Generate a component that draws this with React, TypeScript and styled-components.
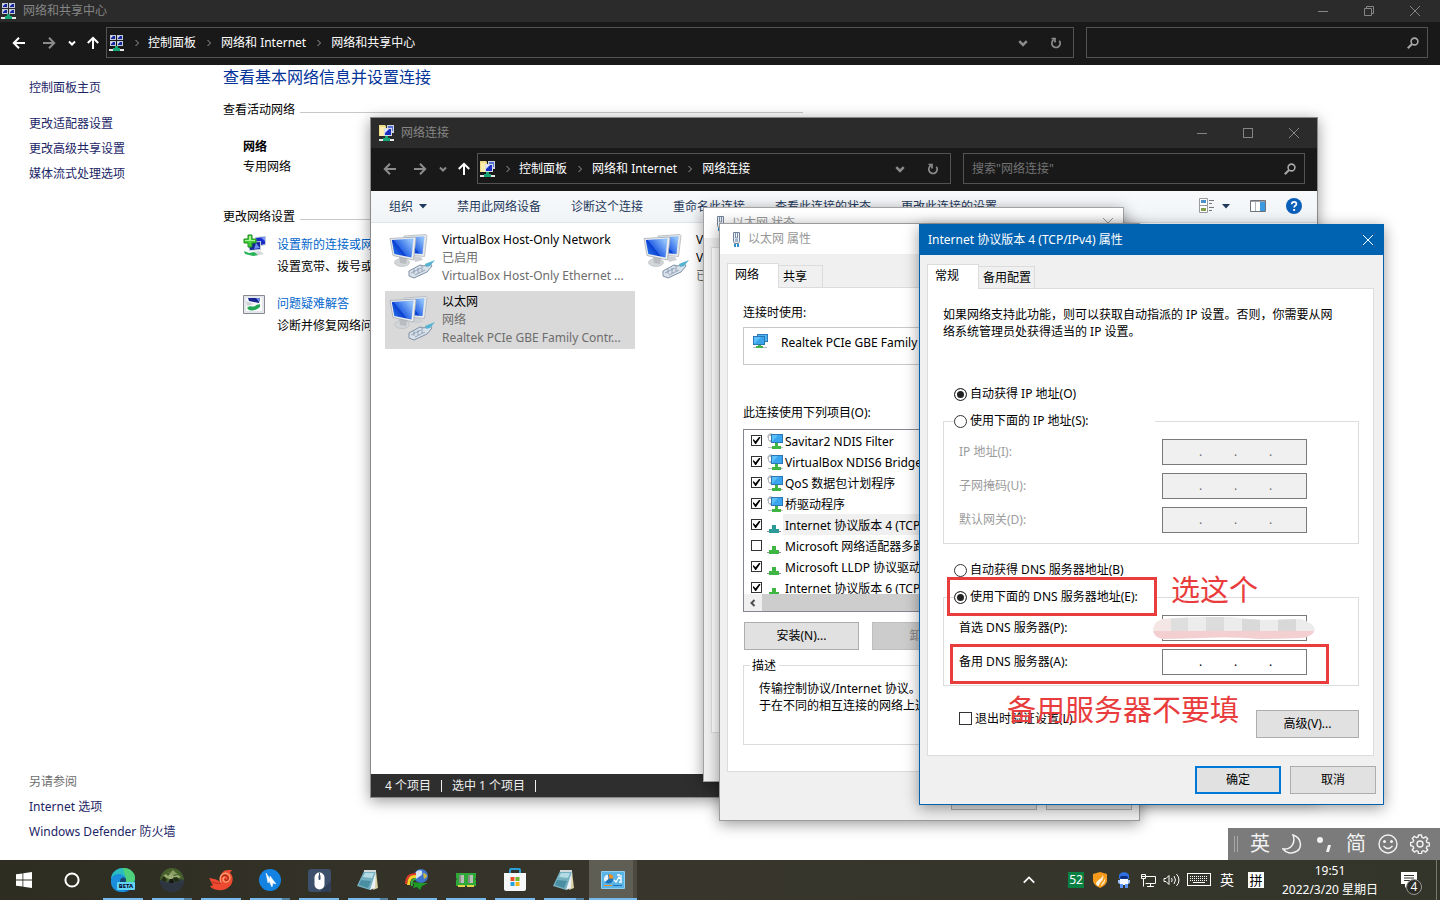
import React from "react";
import styled, { createGlobalStyle, css } from "styled-components";

const GlobalStyle = createGlobalStyle`
  *, *::before, *::after { box-sizing: border-box; }
  body {
    margin: 0;
    font: 12px/16px "Noto Sans", "Noto Sans CJK SC", sans-serif;
    color: #000;
    background: #fff;
  }
  button, input { font: inherit; color: inherit; margin: 0; padding: 0; border-radius: 0; }
  button { background: none; border: 0; }
  p, h1, h2, ul, dl, dd, dt { margin: 0; padding: 0; font: inherit; list-style: none; }
  a { text-decoration: none; color: inherit; }
  svg { display: block; flex: none; }
`;

/* ---------- desktop and windows ---------- */

const Desktop = styled.div`
  position: relative;
  display: flex;
  flex-direction: column;
  min-height: 100vh;
  overflow: hidden;
`;

const MainWindow = styled.section`
  flex: 1;
  display: flex;
  flex-direction: column;
  background: #fff;
`;

const FloatingWindow = styled.section<{ $x: number; $y: number; $w: number; $h: number; $edge: string; $bg: string }>`
  position: absolute;
  left: ${(p) => p.$x}px;
  top: ${(p) => p.$y}px;
  width: ${(p) => p.$w}px;
  min-height: ${(p) => p.$h}px;
  display: flex;
  flex-direction: column;
  border: 1px solid ${(p) => p.$edge};
  background: ${(p) => p.$bg};
  box-shadow: 0 3px 14px rgba(0, 0, 0, 0.4);
`;

const TitleBar = styled.header<{ $height: number; $tone: "dark" | "light" | "blue" }>`
  display: flex;
  align-items: center;
  height: ${(p) => p.$height}px;
  ${(p) =>
    p.$tone === "dark"
      ? css`background: #2b2b2b; color: #858585;`
      : p.$tone === "blue"
      ? css`background: #0063b1; color: #fff;`
      : css`background: #fff; color: #999;`}
`;

const TitleIcon = styled.span<{ $left: number }>`
  padding-left: ${(p) => p.$left}px;
`;

const TitleText = styled.h1`
  flex: 1;
  padding-left: 6px;
`;

const CaptionButton = styled.button`
  width: 46px;
  height: 100%;
  display: grid;
  place-items: center;
`;

const CloseButton = styled(CaptionButton)`
  width: 30px;
`;

const CaptionEnd = styled.span`
  width: 2px;
`;

/* ---------- explorer navigation ---------- */

const NavBar = styled.nav`
  display: flex;
  align-items: center;
  height: 43px;
  padding: 0 12px 2px 4px;
  background: #191919;
  color: #fff;
`;

const NavButton = styled.button<{ $w: number; $dim?: boolean }>`
  width: ${(p) => p.$w}px;
  height: 30px;
  display: grid;
  place-items: center;
  color: ${(p) => (p.$dim ? "#8c8c8c" : "#fff")};
`;

const AddressBar = styled.div`
  flex: 1;
  display: flex;
  align-items: center;
  height: 31px;
  padding-left: 2px;
  border: 1px solid #535353;
  color: #9a9a9a;
`;

const Crumb = styled.a`
  color: #fff;
`;

const CrumbMark = styled.span`
  width: 25px;
  display: grid;
  place-items: center;
  &:first-of-type { width: 23px; }
`;

const Spacer = styled.span`
  flex: 1;
`;

const SearchBox = styled.label`
  display: flex;
  align-items: center;
  width: 342px;
  height: 31px;
  margin-left: 12px;
  padding: 0 8px;
  border: 1px solid #535353;
  color: #a8a8a8;
`;

const SearchInput = styled.input`
  flex: 1;
  min-width: 0;
  border: 0;
  outline: 0;
  background: none;
  &::placeholder { color: #727272; opacity: 1; }
`;

/* ---------- network and sharing centre ---------- */

const MainBody = styled.div`
  flex: 1;
  display: flex;
`;

const Sidebar = styled.aside`
  display: flex;
  flex-direction: column;
  width: 194px;
  padding: 10px 0 16px 29px;
  color: #1b2566;
  line-height: 25px;
`;

const SideHome = styled.a`
  margin-bottom: 11px;
`;

const SideCaption = styled.p`
  color: #6d6d6d;
`;

const Content = styled.main`
  flex: 1;
  padding: 1px 0 0 29px;
`;

const PageTitle = styled.h1`
  font-size: 16px;
  line-height: 22px;
  color: #003399;
`;

const SectionHead = styled.h2<{ $top: number }>`
  display: flex;
  align-items: center;
  gap: 5px;
  width: 580px;
  margin-top: ${(p) => p.$top}px;
  &::after {
    content: "";
    flex: 1;
    height: 1px;
    margin-top: 4px;
    background: #c8c8c8;
  }
`;

const ActiveNetwork = styled.div`
  padding: 19px 0 0 20px;
  line-height: 20px;
`;

const Strong = styled.strong`
  font-weight: 700;
`;

const Task = styled.div<{ $top: number }>`
  display: flex;
  gap: 10px;
  margin-top: ${(p) => p.$top}px;
  padding-left: 20px;
  line-height: 22px;
`;

const TaskLink = styled.a`
  color: #0066cc;
`;

/* ---------- network connections window ---------- */

const CommandBar = styled.div`
  display: flex;
  align-items: center;
  gap: 30px;
  height: 32px;
  padding: 0 15px 0 18px;
  background: linear-gradient(#f7f9fb, #f1f4f7);
  border-bottom: 1px solid #dfe2e6;
  color: #1e395b;
`;

const Command = styled.button`
  display: flex;
  align-items: center;
  gap: 6px;
  white-space: nowrap;
`;

const ViewTools = styled.div`
  display: flex;
  align-items: center;
  gap: 20px;
  margin-left: auto;
  padding-bottom: 1px;
`;

const ConnectionGrid = styled.ul`
  flex: 1;
  display: grid;
  grid-template-columns: 250px 250px;
  grid-auto-rows: 58px;
  gap: 4px;
  padding: 6px 14px;
  background: #fff;
`;

const Connection = styled.li<{ $selected?: boolean }>`
  display: flex;
  gap: 7px;
  padding: 2px 4px;
  line-height: 18px;
  color: #6d6d6d;
  background: ${(p) => (p.$selected ? "#d9d9d9" : "transparent")};
`;

const ConnectionText = styled.div`
  min-width: 0;
  white-space: nowrap;
`;

const ConnectionName = styled.p`
  color: #000;
`;

const StatusBar = styled.footer`
  display: flex;
  align-items: center;
  gap: 10px;
  height: 23px;
  padding-left: 14px;
  background: #2e2e2e;
  color: #f0f0f0;
`;

const StatusMark = styled.span`
  width: 1px;
  height: 12px;
  background: #f0f0f0;
`;

/* ---------- property dialogs ---------- */

const DialogBody = styled.div`
  flex: 1;
  display: flex;
  flex-direction: column;
  padding: 9px 9px 10px 7px;
  background: #f0f0f0;
`;

const TabList = styled.div`
  display: flex;
  align-items: flex-end;
`;

const Tab = styled.button<{ $w: number; $active?: boolean }>`
  width: ${(p) => p.$w}px;
  height: ${(p) => (p.$active ? 25 : 22)}px;
  padding: ${(p) => (p.$active ? "0 0 3px 7px" : "0 0 0 4px")};
  border: 1px solid #dcdcdc;
  border-left-width: ${(p) => (p.$active ? 1 : 0)}px;
  border-bottom: 0;
  margin-bottom: ${(p) => (p.$active ? -1 : 0)}px;
  background: ${(p) => (p.$active ? "#fff" : "#f0f0f0")};
  position: relative;
  text-align: left;
  white-space: nowrap;
`;

const TabPanel = styled.div`
  display: flex;
  flex-direction: column;
  padding: 17px 14px 17px 15px;
  border: 1px solid #dcdcdc;
  background: #fff;
`;

const StatusPanel = styled(TabPanel)`
  flex: 1;
  margin-bottom: 38px;
`;

const AdapterBox = styled.div`
  display: flex;
  gap: 13px;
  height: 38px;
  margin: 6px 0 40px;
  padding: 5px 8px;
  border: 1px solid #c9c9c9;
  line-height: 20px;
`;

const ItemBox = styled.div`
  margin-top: 8px;
  border: 1px solid #828790;
`;

const ItemList = styled.ul`
  height: 164px;
  overflow: hidden;
`;

const Item = styled.li`
  height: 21px;
`;

const ItemLabel = styled.label`
  display: flex;
  align-items: center;
  height: 21px;
  padding-left: 7px;
  white-space: nowrap;
`;

const ItemText = styled.span<{ $selected?: boolean }>`
  flex: 1;
  padding: 4px 0 1px 2px;
  background: ${(p) => (p.$selected ? "#f0f0f0" : "transparent")};
`;

const ItemIcon = styled.span`
  margin-left: 5px;
`;

const CheckBox = styled.input.attrs({ type: "checkbox" })<{ $size: number }>`
  appearance: none;
  flex: none;
  display: grid;
  place-items: center;
  width: ${(p) => p.$size}px;
  height: ${(p) => p.$size}px;
  border: 1px solid #333;
  background: #fff;
  &:checked::before {
    content: "";
    width: 8px;
    height: 8px;
    background: #000;
    clip-path: polygon(0 42%, 14% 34%, 38% 58%, 86% 0, 100% 12%, 44% 94%, 34% 94%);
  }
`;

const ScrollRow = styled.div`
  display: flex;
  height: 17px;
  background: #f0f0f0;
  color: #505050;
`;

const ScrollArrow = styled.button`
  width: 18px;
  display: grid;
  place-items: center;
`;

const ScrollThumb = styled.div`
  width: 260px;
  background: #cdcdcd;
`;

const ButtonRow = styled.div`
  display: flex;
  gap: 13px;
  margin: 10px 0 0 1px;
`;

const ActionRow = styled.div`
  display: flex;
  justify-content: flex-end;
  gap: 9px;
  margin: 10px -2px 0 0;
`;

const PushButton = styled.button<{ $w: number; $primary?: boolean }>`
  width: ${(p) => p.$w}px;
  height: 28px;
  background: #e1e1e1;
  border: ${(p) => (p.$primary ? "2px solid #0078d7" : "1px solid #adadad")};
  &:disabled { background: #ccc; border-color: #bfbfbf; color: #838383; }
`;

const Description = styled.fieldset`
  min-width: 0;
  height: 88px;
  margin: 7px 0 9px;
  padding: 6px 15px 0;
  border: 1px solid #dcdcdc;
  line-height: 17px;
  white-space: nowrap;
`;

const DescriptionLegend = styled.legend`
  margin-left: -9px;
  padding: 0 3px 0 2px;
  line-height: 17px;
`;

const Intro = styled.p`
  line-height: 17px;
  margin-bottom: 46px;
`;

const RadioLabel = styled.label`
  display: flex;
  align-items: center;
  gap: 3px;
  height: 16px;
  padding-left: 11px;
`;

const RadioText = styled.span`
  line-height: 16px;
`;

const Radio = styled.input.attrs({ type: "radio" })`
  appearance: none;
  flex: none;
  width: 13px;
  height: 13px;
  border: 1px solid #333;
  border-radius: 50%;
  background: #fff;
  &:checked { background: #222; box-shadow: inset 0 0 0 2px #fff; }
`;

const AddressGroup = styled.fieldset`
  display: flex;
  flex-direction: column;
  gap: 8px;
  min-width: 0;
  margin: 11px 0 0;
  padding: 10px 51px 10px 15px;
  border: 1px solid #dcdcdc;
`;

const GroupLegend = styled.legend`
  width: 201px;
  margin-left: -5px;
  padding: 0;
  ${RadioLabel} { padding-left: 0; }
`;

const DnsBlock = styled.div`
  margin-top: 18px;
`;

const AddressRow = styled.div<{ $disabled?: boolean }>`
  display: flex;
  align-items: center;
  justify-content: space-between;
  color: ${(p) => (p.$disabled ? "#9c9c9c" : "#000")};
`;

const OctetBox = styled.div<{ $disabled?: boolean }>`
  position: relative;
  display: flex;
  align-items: center;
  width: 145px;
  height: 26px;
  padding-left: 4px;
  border: 1px solid #7a7a7a;
  background: ${(p) => (p.$disabled ? "#f0f0f0" : "#fff")};
  color: ${(p) => (p.$disabled ? "#6d6d6d" : "#000")};
`;

const Octet = styled.input`
  width: 32px;
  border: 0;
  outline: 0;
  background: none;
  text-align: center;
`;

const Dot = styled.span`
  width: 3px;
`;

const Mosaic = styled.svg`
  position: absolute;
  left: -10px;
  top: 1px;
`;

const FooterRow = styled.div`
  display: flex;
  justify-content: space-between;
  align-items: flex-start;
  margin: 24px 0 0 16px;
`;

const CheckLabel = styled.label`
  display: flex;
  align-items: center;
  gap: 3px;
  height: 17px;
`;

/* ---------- red tutorial marks over the dialog ---------- */

const MarkBox = styled.div<{ $x: number; $y: number; $w: number; $h: number }>`
  position: absolute;
  left: ${(p) => p.$x}px;
  top: ${(p) => p.$y}px;
  width: ${(p) => p.$w}px;
  height: ${(p) => p.$h}px;
  border: 3px solid #e93c3c;
  pointer-events: none;
`;

const MarkText = styled.p<{ $x: number; $y: number }>`
  position: absolute;
  left: ${(p) => p.$x}px;
  top: ${(p) => p.$y}px;
  font-size: 29px;
  line-height: 36px;
  color: #e93c3c;
  white-space: nowrap;
  pointer-events: none;
`;

/* ---------- taskbar ---------- */

const Taskbar = styled.footer`
  display: flex;
  height: 40px;
  background: linear-gradient(90deg, #2e2d22, #38362c 45%, #33352a);
  color: #fff;
`;

const SystemButton = styled.button`
  width: 48px;
  display: grid;
  place-items: center;
`;

const AppList = styled.div`
  display: flex;
  gap: 1px;
  padding-left: 3px;
`;

const AppButton = styled.button<{ $active?: boolean; $stacked?: boolean }>`
  display: grid;
  place-items: center;
  position: relative;
  width: 48px;
  background: ${(p) =>
    p.$active ? "linear-gradient(90deg, #5f5e54 44px, #4b4a41 44px)" : "none"};
  &::after {
    content: "";
    position: absolute;
    left: ${(p) => (p.$active ? 0 : 4)}px;
    right: ${(p) => (p.$active ? 0 : 4)}px;
    bottom: 0;
    height: 2px;
    background: ${(p) =>
      p.$stacked ? "linear-gradient(90deg, #76b9ed 32px, #54819f 32px)" : "#76b9ed"};
  }
`;

const Tray = styled.div`
  display: flex;
  align-items: center;
  margin-left: auto;
`;

const TrayButton = styled.button<{ $w: number }>`
  width: ${(p) => p.$w}px;
  height: 40px;
  display: grid;
  place-items: center;
  position: relative;
`;

const NoticeButton = styled(TrayButton)`
  padding-right: 7px;
`;

const GreenBadge = styled.span`
  width: 16px;
  background: #0b8043;
  line-height: 16px;
  text-align: center;
`;

const ImeBadge = styled.span`
  width: 16px;
  background: #fff;
  color: #000;
  font-size: 13px;
  line-height: 16px;
  text-align: center;
`;

const LangText = styled.span`
  font-size: 14px;
`;

const Clock = styled.time`
  width: 116px;
  line-height: 19px;
  text-align: center;
`;

const CountBadge = styled.span`
  position: absolute;
  left: 18px;
  top: 19px;
  width: 16px;
  height: 16px;
  border: 1px solid #999;
  border-radius: 50%;
  background: #2b2c26;
  line-height: 14px;
  text-align: center;
`;

const DesktopEdge = styled.button`
  width: 4px;
  height: 40px;
  border-left: 1px solid #77776f;
`;

const ImeBar = styled.div`
  position: absolute;
  right: 0;
  bottom: 40px;
  display: flex;
  height: 32px;
  padding-right: 4px;
  background: #7b7b7b;
  color: #f2f2f2;
`;

const ImeHandle = styled.span`
  align-self: center;
  width: 4px;
  height: 16px;
  margin: 0 6px;
  border: solid #a8a8a8;
  border-width: 0 1px;
`;

const ImeButton = styled.button`
  width: 32px;
  display: grid;
  place-items: center;
  font-size: 20px;
  line-height: 28px;
`;

/* ---------- icons ---------- */

const MiniPc = ({ x, y }: { x: number; y: number }) => (
  <g>
    <rect x={x} y={y} width="6" height="5" fill="#c4c9d6" />
    <rect x={x + 1} y={y + 1} width="4" height="3" fill="#1626a0" />
    <path d={`M${x + 1} ${y + 1}h2l-2 2z`} fill="#dfe4ff" />
  </g>
);

const HubIcon = () => (
  <svg width="16" height="16" viewBox="0 0 16 16">
    <MiniPc x={1} y={0} />
    <MiniPc x={8} y={0} />
    <MiniPc x={1} y={6} />
    <MiniPc x={8} y={6} />
    <path d="M6 11h3v2h2v3H4v-3h2z" fill="#17a673" />
    <path d="M0 14h4v2H0zM11 14h4v2h-4z" fill="#e4e8e8" />
  </svg>
);

const FolderNetIcon = () => (
  <svg width="16" height="16" viewBox="0 0 16 16">
    <path d="M0 0h6l1 1v10H0z" fill="#f0dc86" />
    <path d="M1 2h5v9H1z" fill="#f9edb0" />
    <rect x="8" y="0" width="7" height="8" fill="#cfd3dc" />
    <rect x="9" y="1" width="5" height="5" fill="#5570d8" />
    <rect x="5" y="3" width="8" height="8" fill="#d6dae4" />
    <rect x="6" y="4" width="6" height="6" fill="#1a2ec0" />
    <path d="M6 4h4l-4 4z" fill="#dfe6ff" />
    <path d="M6 11h3v2h2v3H4v-3h2z" fill="#17a673" />
    <path d="M0 14h4v2H0zM11 14h4v2h-4z" fill="#e4e8e8" />
  </svg>
);

const Arrow = ({ turn = 0 }: { turn?: number }) => (
  <svg width="14" height="14" viewBox="0 0 14 14" fill="none" stroke="currentColor" strokeWidth="2">
    <g transform={`rotate(${turn} 7 7)`}>
      <path d="M13 7H2M7 1.800L1.800 7L7 12.200" />
    </g>
  </svg>
);

const Chevron = ({ size = 8, turn = 0, weight = 2 }: { size?: number; turn?: number; weight?: number }) => (
  <svg width={size} height={size} viewBox="0 0 8 8" fill="none" stroke="currentColor" strokeWidth={weight}>
    <path transform={`rotate(${turn} 4 4)`} d="M1 2.500l3 3l3-3" />
  </svg>
);

const RefreshIcon = () => (
  <svg width="12" height="12" viewBox="0 0 12 12" fill="none" stroke="currentColor" strokeWidth="1.700">
    <path d="M4 2.600A4.200 4.200 0 1 0 9.300 3.700" />
    <path d="M1.500 1.500H5v4" />
  </svg>
);

const MagnifierIcon = () => (
  <svg width="12" height="12" viewBox="0 0 12 12" fill="none" stroke="currentColor" strokeWidth="1.600">
    <circle cx="7.500" cy="4.500" r="3.400" />
    <path d="M5 7L.8 11.200" strokeWidth="2" />
  </svg>
);

const CloseIcon = () => (
  <svg width="12" height="12" viewBox="0 0 12 12" fill="none" stroke="currentColor">
    <path d="M1 1l10 10M11 1L1 11" />
  </svg>
);

const MinimizeIcon = () => (
  <svg width="10" height="10" viewBox="0 0 10 10" fill="none" stroke="currentColor">
    <path d="M0 5.500h10" />
  </svg>
);

const MaximizeIcon = () => (
  <svg width="10" height="10" viewBox="0 0 10 10" fill="none" stroke="currentColor">
    <rect x=".5" y=".5" width="9" height="9" />
  </svg>
);

const RestoreIcon = () => (
  <svg width="10" height="10" viewBox="0 0 10 10" fill="none" stroke="currentColor">
    <path d="M.5 2.500h7v7h-7zM2.500 2.500v-2h7v7h-2" />
  </svg>
);

const CaretIcon = () => (
  <svg width="8" height="5" viewBox="0 0 8 5">
    <path d="M0 0h8L4 4.500z" fill="currentColor" />
  </svg>
);

const NewConnectionIcon = () => (
  <svg width="24" height="24" viewBox="0 0 24 24">
    <path d="M12 3l11-1v9l-10 2z" fill="#c3cbd6" />
    <path d="M13 4l9-1v7l-8 2z" fill="#1930c8" />
    <path d="M18 3.500l4-.5v4z" fill="#7f9bff" />
    <path d="M5 8l13-1v9L6 17z" fill="#c9d0da" />
    <path d="M6 9l11-1v7L7 16z" fill="#14249a" />
    <path d="M11 15l6-1-4-5z" fill="#6f8df0" />
    <path d="M9 18l8-1 4 3-9 2z" fill="#d5d9de" />
    <path d="M1 17l5 2 5-1 4 3-5 1-8-2z" fill="#29b35a" />
    <path d="M5 1h4v4h4v4H9v4H5V9H1V5h4z" fill="#43cf3a" stroke="#1c8c1c" />
    <path d="M6 2h2v4h4v1H2V6h4z" fill="#a6f598" />
  </svg>
);

const TroubleshootIcon = () => (
  <svg width="24" height="22" viewBox="0 0 24 22">
    <path d="M.5 2.500h21v18h-21z" fill="#e3e6ea" stroke="#86898f" />
    <path d="M3 5h16v13H3z" fill="#fafafa" />
    <path d="M5 5h12l-1 5-10-2z" fill="#16258f" />
    <path d="M13 5h4l-1 4z" fill="#6f8be8" />
    <path d="M4 15c3-4 6 0 8-2s4-1 5-2v3c-3 3-8 4-11 3z" fill="#22a852" />
    <path d="M3 8l8 3-7 2z" fill="#cdd2d8" />
  </svg>
);

const ConnectionIcon = () => (
  <svg width="46" height="50" viewBox="0 0 46 50">
    <defs>
      <linearGradient id="screenGlow" x1="0" y1="1" x2="1" y2="0.300">
        <stop offset="0" stopColor="#2f86f5" />
        <stop offset=".48" stopColor="#0b3fd0" />
        <stop offset=".5" stopColor="#2a66e6" />
        <stop offset="1" stopColor="#8fc0fb" />
      </linearGradient>
    </defs>
    <path d="M24 25l8 1 2 3-8 2z" fill="#cdd0d4" />
    <path d="M15 5l22-1.500 1 1-2.500 21L20 24z" fill="#e6e9ec" stroke="#b0b5bb" strokeWidth=".8" />
    <path d="M17 6.500l18.500-1.300L33.500 23 20 22z" fill="url(#screenGlow)" />
    <ellipse cx="13" cy="31.500" rx="7.500" ry="4" fill="#d3d6d9" stroke="#b4b8bc" strokeWidth=".6" />
    <path d="M10 25l8 2-1 6-6-1z" fill="#b9bdc2" />
    <path d="M1 7.500L26 6l1 1-2.500 22L4 24.500z" fill="#eceef0" stroke="#a5abb2" strokeWidth=".8" />
    <path d="M2.800 9L24.500 7.600 22.500 26.500 5.300 23z" fill="url(#screenGlow)" />
    <path d="M20 40l11-6 4 1 6-3 2 3-5 6-13 6-5-2z" fill="#d9e2ea" stroke="#7e90a5" />
    <path d="M22 42l10-5M26 44l10-5M25 38v5M29 37v5M33 35v5" stroke="#8193a8" strokeWidth=".8" fill="none" />
    <path d="M36 33l10-4-5 6-4 1z" fill="#55b2d0" />
  </svg>
);

const PlugIcon = () => (
  <svg width="11" height="17" viewBox="0 0 11 17">
    <path d="M2.500 1.500h6v9l-1 2h-4l-1-2z" fill="#eef2f6" stroke="#6f8299" />
    <path d="M4.500 2v5h2V2" fill="none" stroke="#7c8ea3" />
    <path d="M4 8h3v3H4z" fill="#9db4ca" />
    <path d="M3 13h2v3H3zM6 13h2v3H6z" fill="#2a8fd0" />
  </svg>
);

const AdapterIcon = () => (
  <svg width="16" height="16" viewBox="0 0 16 16">
    <path d="M5 1h11v8H5z" fill="#2f7ab5" />
    <path d="M6 2h9v6H6z" fill="#4fb4f4" />
    <path d="M1 3h12v9H1z" fill="#2b77b3" />
    <path d="M2 4h10v7H2z" fill="#5cc0fa" />
    <path d="M2 11l7-7h3v7z" fill="#3ba5ec" />
    <path d="M6 12h3v1h2v2H4v-2h2z" fill="#46b04a" />
    <path d="M1 14h3v1H1zM11 14h4v1h-4z" fill="#b9bdc0" />
  </svg>
);

const ServiceIcon = () => (
  <svg width="16" height="16" viewBox="0 0 16 16">
    <path d="M3 0l3 1v9l-3-1-2-2V5L0 4l1-2z" fill="#b4bac1" />
    <path d="M2 3h2v4H2z" fill="#fff" />
    <path d="M4 1h12v9H4z" fill="#2d78b4" />
    <path d="M5 2h10v7H5z" fill="#5cc0fa" />
    <path d="M5 9l6-7h4v7z" fill="#38a5ee" />
    <path d="M8 10h3v3h3v3H5v-3h3z" fill="#3fb543" />
    <path d="M1 14h4v1H1zM14 14h2v1h-2z" fill="#b9bdc0" />
  </svg>
);

const ProtocolIcon = ({ tint = "#3fb543" }: { tint?: string }) => (
  <svg width="16" height="16" viewBox="0 0 16 16">
    <path d="M5 8h4v4h3v4H2v-4h3z" fill={tint} />
    <path d="M0 14h2v1H0zM12 14h2v1h-2z" fill="#8a9096" />
  </svg>
);

const DetailViewIcon = () => (
  <svg width="17" height="16" viewBox="0 0 17 16" fill="none">
    <path d="M.5.500h8v7h-8zM.5 7.500h8v7h-8z" fill="#fff" stroke="#9a9a9a" />
    <path d="M2 2h5v3H2z" fill="#4b8fc9" />
    <path d="M2 10h5v3H2z" fill="#83a04f" />
    <path d="M10 2.500h5M10 5.500h3M10 9.500h5M10 12.500h3" stroke="#777" />
  </svg>
);

const PreviewPaneIcon = () => (
  <svg width="16" height="12" viewBox="0 0 16 12">
    <path d="M.5.500h15v11H.5z" fill="#fff" stroke="#6f7378" />
    <path d="M1 1h14v1H1z" fill="#a0a4a8" />
    <path d="M10 2h5v9h-5z" fill="#3c9be0" />
    <path d="M5 2h1v9H5z" fill="#b0b4b8" />
  </svg>
);

const HelpIcon = () => (
  <svg width="16" height="16" viewBox="0 0 16 16">
    <circle cx="8" cy="8" r="8" fill="#0a5fb8" />
    <path d="M5.700 6.200C5.700 3 10.400 3.200 10.400 6C10.400 7.800 8.100 7.700 8.100 9.600" fill="none" stroke="#fff" strokeWidth="1.700" />
    <rect x="7.200" y="11" width="1.900" height="1.900" fill="#fff" />
  </svg>
);

const WindowsLogo = () => (
  <svg width="16" height="16" viewBox="0 0 16 16" fill="#fff">
    <path d="M0 2.300l6.500-.9v6.100H0zM7.300 1.300L16 0v7.500H7.300zM0 8.400h6.500v6.200L0 13.700zM7.300 8.400H16V16l-8.700-1.200z" />
  </svg>
);

const CortanaIcon = () => (
  <svg width="16" height="16" viewBox="0 0 16 16">
    <circle cx="8" cy="8" r="6.600" fill="none" stroke="#fff" strokeWidth="2" />
  </svg>
);

const BetaTag = styled.span`
  position: absolute;
  left: 18px;
  top: 22px;
  width: 18px;
  height: 8px;
  border-radius: 1px;
  background: #62d5f7;
  color: #002;
  font-size: 6px;
  font-weight: 700;
  line-height: 8px;
  text-align: center;
`;

const EdgeIcon = () => (
  <>
    <svg width="24" height="24" viewBox="0 0 24 24">
      <circle cx="12" cy="12" r="12" fill="#1374c8" />
      <path d="M0 11C1-3 22-4 24 10c0 5-4 7-8 6-3-1 0-2-1-5C12 5 3 5 0 11z" fill="#2bbcc0" />
      <path d="M12 0c8 0 12 5 12 10 0 5-4 7-8 6-3-1 0-2-1-5 0-4-3-8-3-11z" fill="#4fd07a" />
      <path d="M0 12c2-7 11-8 14-2-4-1-6 3-5 7 1 3 4 6 7 6C5 27-1 19 0 12z" fill="#1a8edb" />
      <path d="M9 13c0-4 6-5 6-1 0 2-1 2 0 4 1 1 5 2 8 0-3 6-13 5-14-3z" fill="#17466f" />
    </svg>
    <BetaTag>BETA</BetaTag>
  </>
);

const TreeIcon = () => (
  <svg width="24" height="24" viewBox="0 0 24 24">
    <circle cx="12" cy="12" r="12" fill="#313b45" />
    <path d="M0 12C2-4 22-4 24 12l-4-1-3 2-5-2-5 3-3-2z" fill="#47602a" />
    <path d="M3 8l3-2 2 2 3-3 3 3 4-1 3 2-3 1-4-1-3 3-4-2z" fill="#9bab74" />
    <path d="M7 4l3 1 3-3 3 3 2 1-5 1-2-1z" fill="#8c9d66" />
    <path d="M1 12l3-4 3 4-2 2zM13 10l4-1 3 4-5 1z" fill="#222f14" />
    <path d="M10 11h3l1 4H9z" fill="#151811" />
    <path d="M0 14c6 2 17 2 24 0-1 5-5 10-12 10S1 19 0 14z" fill="#2c3540" />
  </svg>
);

const ShellIcon = () => (
  <svg width="24" height="22" viewBox="0 0 24 22">
    <path d="M0 9c5 1 8 1 11 4-1-6 2-12 8-12h4l-2 3c4 3 3 10 0 13-5 6-17 5-20 0 2 0 3-1 3-1C2 14 2 12 0 9z" fill="#ee4a31" />
    <path d="M12 14c-3-8 3-11 7-9 4 3 1 9-3 8-3-1-2-5 0-5" fill="none" stroke="#ff9b6b" strokeWidth="1.400" />
    <path d="M13 8c2-3 7-2 6 2 0 2-3 2-3 0" fill="none" stroke="#8b1f12" />
    <path d="M3 13c4 1 6 2 9 1" fill="none" stroke="#b52c1c" />
  </svg>
);

const ThunderIcon = () => (
  <svg width="22" height="22" viewBox="0 0 22 22">
    <circle cx="11" cy="11" r="11" fill="#1482e0" />
    <path d="M7 4l4 6V7l6 8-3-1-1 4-3-6-1 2z" fill="#fff" stroke="#fff" strokeWidth=".5" />
  </svg>
);

const MouseIcon = () => (
  <svg width="23" height="23" viewBox="0 0 23 23">
    <rect width="23" height="23" rx="3" fill="#3d506b" />
    <path d="M23 12v8l-3 3h-8z" fill="#2e3f57" />
    <rect x="6.500" y="3.500" width="10" height="17" rx="5" fill="#fff" />
    <path d="M11.500 4v4" stroke="#3d506b" />
    <rect x="10.500" y="6" width="2" height="5" rx="1" fill="#3d506b" />
  </svg>
);

const NotepadIcon = () => (
  <svg width="24" height="24" viewBox="0 0 24 24">
    <path d="M20 3l2 17-5 2z" fill="#d9cfa0" />
    <path d="M8 3h12l-1 17-5 2z" fill="#e9f1f4" />
    <path d="M8 3h12l-6 19L1 18z" fill="#74b0c0" />
    <path d="M9 5h9l-2 5-9-1z" fill="#b4dbe3" />
    <path d="M5 12l10 1-3 7-9-3z" fill="#4a8ea2" />
    <path d="M8 2h12v2H8z" fill="#d2dade" />
  </svg>
);

const DownloaderIcon = () => (
  <svg width="24" height="22" viewBox="0 0 24 22">
    <circle cx="16" cy="7" r="7" fill="#3f74cc" />
    <path d="M12 2c4-2 6 0 5 3s-4 2-5 5c-3-3-2-6 0-8z" fill="#d8e4f0" />
    <path d="M18 4c2 0 4 1 4 4l-3 2z" fill="#c8b84a" />
    <path d="M11 5C4 5 1 9 1 15" fill="none" stroke="#e5372c" strokeWidth="2" />
    <path d="M11 7.500C6 7 3.500 10 3.500 16" fill="none" stroke="#f7d22c" strokeWidth="3" />
    <path d="M11 10c-4 0-5 3-4 7" fill="none" stroke="#36b343" strokeWidth="2" />
    <path d="M8 13l8 1 7 0-6 3-2 4-3-3-4 1 1-3z" fill="#1d9a26" />
  </svg>
);

const MemoryIcon = () => (
  <svg width="20" height="16" viewBox="0 0 20 16">
    <path d="M0 1h20v5l-1 1 1 1v6H0V8l1-1-1-1z" fill="#2ea836" />
    <path d="M3 3h5v8H3zM12 3h5v8h-5z" fill="#b9bdb6" />
    <path d="M3 3h2v8H3zM12 3h2v8h-2z" fill="#8a8e88" />
    <path d="M2 13h7v2H2zM11 13h7v2h-7z" fill="#e0d64a" />
  </svg>
);

const StoreIcon = () => (
  <svg width="24" height="24" viewBox="0 0 24 24">
    <path d="M7 6V2q0-1 1-1h8q1 0 1 1v4" fill="none" stroke="#2aa0d8" strokeWidth="2" />
    <path d="M1 5h22v16q0 2-2 2H3q-2 0-2-2z" fill="#f5f7f8" />
    <path d="M7.500 9h4v4h-4z" fill="#e8502a" />
    <path d="M12.500 9h4v4h-4z" fill="#6fb52c" />
    <path d="M7.500 14h4v4h-4z" fill="#26a0e0" />
    <path d="M12.500 14h4v4h-4z" fill="#f4b619" />
  </svg>
);

const ControlPanelIcon = () => (
  <svg width="24" height="18" viewBox="0 0 24 18">
    <rect width="24" height="18" rx="1" fill="#8fd0f2" />
    <rect x="1" y="1" width="22" height="16" fill="#5ab4e6" />
    <circle cx="7.500" cy="8" r="4.500" fill="#1d72b8" />
    <path d="M8 7.500V3a4.500 4.500 0 0 1 4.500 4.500z" fill="#f09023" />
    <path d="M7.500 8L4 11a4.500 4.500 0 0 1 3-7.500z" fill="#e7f4fc" />
    <path d="M13 9l2 2 3-5 1 2M16 4h3M20 4v6M18 11h3" fill="none" stroke="#fff" strokeWidth="1.300" />
    <path d="M3 14h8v1H3z" fill="#f09023" />
    <path d="M12 14h9v1h-9z" fill="#1d72b8" />
  </svg>
);

const ShieldIcon = () => (
  <svg width="14" height="16" viewBox="0 0 14 16">
    <path d="M7 0l7 2v6c0 4-3 6-7 8-4-2-7-4-7-8V2z" fill="#f59a1b" />
    <path d="M10 3c-1 4-5 4-7 8 0 2 1 3 3 3 0-4 6-6 4-11z" fill="#fff3dc" />
    <path d="M12 6c1 4-1 6-4 8 0-3 3-4 4-8z" fill="#ffe3ad" />
  </svg>
);

const RobotIcon = () => (
  <svg width="14" height="16" viewBox="0 0 14 16">
    <path d="M2 4c0-5 10-5 10 0v3H2z" fill="#2f6fe0" />
    <rect x="3" y="4" width="8" height="3" rx="1.500" fill="#0d2d80" />
    <path d="M1 8h12v3l-2 1H3l-2-1z" fill="#9dc1ff" />
    <path d="M3 7h8v6H3z" fill="#f5faff" />
    <path d="M3 12h3v4H3zM8 12h3v4H8z" fill="#5b93f5" />
  </svg>
);

const NetworkTrayIcon = () => (
  <svg width="17" height="15" viewBox="0 0 17 15" fill="none" stroke="#fff">
    <path d="M5.500 3.500h10v7h-10M10.500 10.500v3M7 13.500h7" />
    <path d="M1.500 1.500h4v4h-4zM3.500 5.500v8M2 3.500h3" />
  </svg>
);

const VolumeIcon = () => (
  <svg width="18" height="14" viewBox="0 0 18 14" fill="none" stroke="#fff">
    <path d="M1 5.500h2l3-3v9l-3-3H1zM8.500 5q1.500 2 0 4M11 3q3 4 0 8M13.500 1q5 6 0 12" />
  </svg>
);

const KeyboardIcon = () => (
  <svg width="24" height="14" viewBox="0 0 24 14" fill="none" stroke="#fff">
    <rect x=".5" y=".5" width="23" height="12" />
    <path d="M3 3.500h18M3 5.500h18M3 7.500h18" strokeDasharray="1 1" />
    <path d="M6 9.500h12" />
  </svg>
);

const MessageIcon = () => (
  <svg width="16" height="16" viewBox="0 0 16 16">
    <path d="M0 0h16v12H7l-3 4v-4H0z" fill="#fff" />
    <path d="M3 3.500h10M3 6h10M3 8.500h6" stroke="#33352a" />
  </svg>
);

const MoonIcon = () => (
  <svg width="20" height="20" viewBox="0 0 20 20" fill="none" stroke="currentColor" strokeWidth="1.500">
    <path d="M11 1c9 3 10 14 2 17-4 2-9 1-12-3 8 1 13-6 10-14z" />
  </svg>
);

const PunctuationIcon = () => (
  <svg width="16" height="18" viewBox="0 0 16 18" fill="currentColor">
    <circle cx="4" cy="5" r="3" />
    <path d="M12 10h3l-2 7h-3z" />
  </svg>
);

const SmileIcon = () => (
  <svg width="20" height="20" viewBox="0 0 20 20" fill="none" stroke="currentColor" strokeWidth="1.400">
    <circle cx="10" cy="10" r="9" />
    <path d="M5.500 12q4.500 5 9 0" />
    <circle cx="6.500" cy="7.500" r=".8" fill="currentColor" />
    <circle cx="13.500" cy="7.500" r=".8" fill="currentColor" />
  </svg>
);

const GearIcon = () => (
  <svg width="20" height="20" viewBox="0 0 20 20" fill="none" stroke="currentColor" strokeWidth="1.400">
    <path strokeLinejoin="round" d="M8.500 1h3l.4 2.400 1.700.7 2-1.400 2.100 2.100-1.400 2 .7 1.700 2.400.4v3l-2.400.4-.7 1.700 1.400 2-2.100 2.100-2-1.400-1.700.7-.4 2.400h-3l-.4-2.400-1.700-.7-2 1.400-2.100-2.100 1.400-2-.7-1.700L.6 11.500v-3l2.400-.4.7-1.700-1.400-2 2.100-2.100 2 1.400 1.700-.7z" />
    <circle cx="10" cy="10" r="3" />
  </svg>
);

/* ---------- composed parts ---------- */

function WindowCaption({ maximized }: { maximized?: boolean }) {
  return (
    <>
      <CaptionButton aria-label="最小化"><MinimizeIcon /></CaptionButton>
      <CaptionButton aria-label="最大化">{maximized ? <RestoreIcon /> : <MaximizeIcon />}</CaptionButton>
      <CaptionButton aria-label="关闭"><CloseIcon /></CaptionButton>
    </>
  );
}

function Navigation({ icon, path, placeholder, backDim }: { icon: React.ReactNode; path: string[]; placeholder?: string; backDim?: boolean }) {
  return (
    <NavBar>
      <NavButton $w={30} $dim={backDim} aria-label="后退"><Arrow /></NavButton>
      <NavButton $w={30} $dim aria-label="前进"><Arrow turn={180} /></NavButton>
      <NavButton $w={16} $dim={backDim} aria-label="历史"><Chevron /></NavButton>
      <NavButton $w={26} aria-label="向上"><Arrow turn={90} /></NavButton>
      <AddressBar>
        {icon}
        {path.map((part) => (
          <React.Fragment key={part}>
            <CrumbMark><Chevron turn={-90} weight={1} /></CrumbMark>
            <Crumb href="#">{part}</Crumb>
          </React.Fragment>
        ))}
        <Spacer />
        <NavButton $w={32} $dim aria-label="展开"><Chevron size={10} /></NavButton>
        <NavButton $w={34} $dim aria-label="刷新"><RefreshIcon /></NavButton>
      </AddressBar>
      <SearchBox>
        <SearchInput type="text" placeholder={placeholder} aria-label="搜索" />
        <MagnifierIcon />
      </SearchBox>
    </NavBar>
  );
}

function IpField({ label, disabled, masked }: { label: string; disabled?: boolean; masked?: boolean }) {
  return (
    <AddressRow $disabled={disabled}>
      <span>{label}</span>
      <OctetBox $disabled={disabled} role="group" aria-label={label}>
        {[0, 1, 2, 3].map((n) => (
          <React.Fragment key={n}>
            {n > 0 && !masked && <Dot>.</Dot>}
            <Octet type="text" disabled={disabled} aria-label={`${label} ${n + 1}`} />
          </React.Fragment>
        ))}
        {masked && (
          <Mosaic width="162" height="23" viewBox="0 0 162 23">
            <defs>
              <clipPath id="brush">
                <path d="M10 2q60-4 76-1t62 1q12 4 14 10q-2 8-14 9l-40 1q-30-3-60-1l-38 1Q0 20 0 12Q2 4 10 2z" />
              </clipPath>
            </defs>
            <g clipPath="url(#brush)">
              <rect width="162" height="23" fill="#ececec" />
              <rect width="18" height="14" fill="#f5e6e6" />
              <rect x="18" width="17" height="14" fill="#dedede" />
              <rect x="53" width="18" height="14" fill="#dcdcdc" />
              <rect x="89" width="18" height="14" fill="#d9d9d9" />
              <rect x="125" width="18" height="14" fill="#d8d8d8" />
              <rect y="14" width="162" height="9" fill="#f3cfd2" />
            </g>
          </Mosaic>
        )}
      </OctetBox>
    </AddressRow>
  );
}

const BINDINGS: { name: string; on: boolean; kind: "service" | "protocol"; selected?: boolean }[] = [
  { name: "Savitar2 NDIS Filter", on: true, kind: "service" },
  { name: "VirtualBox NDIS6 Bridged", on: true, kind: "service" },
  { name: "QoS 数据包计划程序", on: true, kind: "service" },
  { name: "桥驱动程序", on: true, kind: "service" },
  { name: "Internet 协议版本 4 (TCP/IPv4)", on: true, kind: "protocol", selected: true },
  { name: "Microsoft 网络适配器多路", on: false, kind: "protocol" },
  { name: "Microsoft LLDP 协议驱动", on: true, kind: "protocol" },
  { name: "Internet 协议版本 6 (TCP/IPv6)", on: true, kind: "protocol" },
];

const COMMANDS = ["禁用此网络设备", "诊断这个连接", "重命名此连接", "查看此连接的状态", "更改此连接的设置"];

const APPS: { name: string; icon: React.ReactNode; stacked?: boolean; active?: boolean }[] = [
  { name: "浏览器", icon: <EdgeIcon /> },
  { name: "风景", icon: <TreeIcon />, stacked: true },
  { name: "海螺", icon: <ShellIcon /> },
  { name: "闪电", icon: <ThunderIcon />, stacked: true },
  { name: "鼠标", icon: <MouseIcon /> },
  { name: "记事本", icon: <NotepadIcon />, stacked: true },
  { name: "下载", icon: <DownloaderIcon /> },
  { name: "内存", icon: <MemoryIcon /> },
  { name: "商店", icon: <StoreIcon /> },
  { name: "记事本", icon: <NotepadIcon />, stacked: true },
  { name: "控制面板", icon: <ControlPanelIcon />, active: true },
];

function SharingCentre() {
  return (
    <MainWindow>
      <TitleBar $height={22} $tone="dark">
        <TitleIcon $left={1}><HubIcon /></TitleIcon>
        <TitleText>网络和共享中心</TitleText>
        <WindowCaption maximized />
        <CaptionEnd />
      </TitleBar>
      <Navigation icon={<HubIcon />} path={["控制面板", "网络和 Internet", "网络和共享中心"]} />
      <MainBody>
        <Sidebar>
          <SideHome href="#">控制面板主页</SideHome>
          <a href="#">更改适配器设置</a>
          <a href="#">更改高级共享设置</a>
          <a href="#">媒体流式处理选项</a>
          <Spacer />
          <SideCaption>另请参阅</SideCaption>
          <a href="#">Internet 选项</a>
          <a href="#">Windows Defender 防火墙</a>
        </Sidebar>
        <Content>
          <PageTitle>查看基本网络信息并设置连接</PageTitle>
          <SectionHead $top={14}>查看活动网络</SectionHead>
          <ActiveNetwork>
            <Strong>网络</Strong>
            <p>专用网络</p>
          </ActiveNetwork>
          <SectionHead $top={32}>更改网络设置</SectionHead>
          <Task $top={9}>
            <NewConnectionIcon />
            <div>
              <TaskLink href="#">设置新的连接或网络</TaskLink>
              <p>设置宽带、拨号或 VPN 连接</p>
            </div>
          </Task>
          <Task $top={15}>
            <TroubleshootIcon />
            <div>
              <TaskLink href="#">问题疑难解答</TaskLink>
              <p>诊断并修复网络问题</p>
            </div>
          </Task>
        </Content>
      </MainBody>
    </MainWindow>
  );
}

function ConnectionsWindow() {
  return (
    <FloatingWindow $x={370} $y={117} $w={948} $h={681} $edge="#8a8a8a" $bg="#fff">
      <TitleBar $height={30} $tone="dark">
        <TitleIcon $left={8}><FolderNetIcon /></TitleIcon>
        <TitleText>网络连接</TitleText>
        <WindowCaption />
      </TitleBar>
      <Navigation icon={<FolderNetIcon />} path={["控制面板", "网络和 Internet", "网络连接"]} placeholder={'搜索"网络连接"'} backDim />
      <CommandBar>
        <Command>组织 <CaretIcon /></Command>
        {COMMANDS.map((name) => (
          <Command key={name}>{name}</Command>
        ))}
        <ViewTools>
          <Command aria-label="更改视图"><DetailViewIcon /><CaretIcon /></Command>
          <Command aria-label="预览窗格"><PreviewPaneIcon /></Command>
          <Command aria-label="帮助"><HelpIcon /></Command>
        </ViewTools>
      </CommandBar>
      <ConnectionGrid>
        <Connection>
          <ConnectionIcon />
          <ConnectionText>
            <ConnectionName>VirtualBox Host-Only Network</ConnectionName>
            <p>已启用</p>
            <p>VirtualBox Host-Only Ethernet ...</p>
          </ConnectionText>
        </Connection>
        <Connection>
          <ConnectionIcon />
          <ConnectionText>
            <ConnectionName>VirtualBox Host-Only</ConnectionName>
            <ConnectionName>VirtualBox Network</ConnectionName>
            <p>已启用</p>
          </ConnectionText>
        </Connection>
        <Connection $selected>
          <ConnectionIcon />
          <ConnectionText>
            <ConnectionName>以太网</ConnectionName>
            <p>网络</p>
            <p>Realtek PCIe GBE Family Contr...</p>
          </ConnectionText>
        </Connection>
      </ConnectionGrid>
      <StatusBar>
        <span>4 个项目</span>
        <StatusMark />
        <span>选中 1 个项目</span>
        <StatusMark />
      </StatusBar>
    </FloatingWindow>
  );
}

function StatusDialog() {
  return (
    <FloatingWindow $x={703} $y={207} $w={421} $h={575} $edge="#a3a3a3" $bg="#f0f0f0">
      <TitleBar $height={30} $tone="light">
        <TitleIcon $left={11}><PlugIcon /></TitleIcon>
        <TitleText>以太网 状态</TitleText>
        <CloseButton aria-label="关闭"><CloseIcon /></CloseButton>
      </TitleBar>
      <DialogBody>
        <StatusPanel />
      </DialogBody>
    </FloatingWindow>
  );
}

function PropertiesDialog() {
  return (
    <FloatingWindow $x={719} $y={223} $w={421} $h={598} $edge="#9b9b9b" $bg="#f0f0f0">
      <TitleBar $height={30} $tone="light">
        <TitleIcon $left={11}><PlugIcon /></TitleIcon>
        <TitleText>以太网 属性</TitleText>
      </TitleBar>
      <DialogBody>
        <TabList role="tablist">
          <Tab role="tab" $w={52} $active>网络</Tab>
          <Tab role="tab" $w={44}>共享</Tab>
        </TabList>
        <TabPanel>
          <p>连接时使用:</p>
          <AdapterBox><AdapterIcon />Realtek PCIe GBE Family</AdapterBox>
          <p>此连接使用下列项目(O):</p>
          <ItemBox>
            <ItemList>
              {BINDINGS.map((b) => (
                <Item key={b.name}>
                  <ItemLabel>
                    <CheckBox $size={11} defaultChecked={b.on} />
                    <ItemIcon>
                      {b.kind === "service" ? <ServiceIcon /> : <ProtocolIcon tint={b.selected ? "#2c9a98" : undefined} />}
                    </ItemIcon>
                    <ItemText $selected={b.selected}>{b.name}</ItemText>
                  </ItemLabel>
                </Item>
              ))}
            </ItemList>
            <ScrollRow>
              <ScrollArrow aria-label="向左滚动"><Chevron turn={90} /></ScrollArrow>
              <ScrollThumb />
            </ScrollRow>
          </ItemBox>
          <ButtonRow>
            <PushButton $w={115}>安装(N)...</PushButton>
            <PushButton $w={115} disabled>卸载(U)</PushButton>
          </ButtonRow>
          <Description>
            <DescriptionLegend>描述</DescriptionLegend>
            传输控制协议/Internet 协议。
            <br />
            于在不同的相互连接的网络上通
          </Description>
        </TabPanel>
        <ActionRow>
          <PushButton $w={86}>确定</PushButton>
          <PushButton $w={86}>取消</PushButton>
        </ActionRow>
      </DialogBody>
    </FloatingWindow>
  );
}

function Ipv4Dialog() {
  return (
    <FloatingWindow $x={919} $y={224} $w={465} $h={581} $edge="#0063b1" $bg="#f0f0f0">
      <TitleBar $height={30} $tone="blue">
        <TitleIcon $left={2} />
        <TitleText>Internet 协议版本 4 (TCP/IPv4) 属性</TitleText>
        <CloseButton aria-label="关闭"><CloseIcon /></CloseButton>
      </TitleBar>
      <DialogBody>
        <TabList role="tablist">
          <Tab role="tab" $w={52} $active>常规</Tab>
          <Tab role="tab" $w={56}>备用配置</Tab>
        </TabList>
        <TabPanel>
          <Intro>
            如果网络支持此功能，则可以获取自动指派的 IP 设置。否则，你需要从网
            <br />
            络系统管理员处获得适当的 IP 设置。
          </Intro>
          <RadioLabel>
            <Radio name="ip" defaultChecked />
            <RadioText>自动获得 IP 地址(O)</RadioText>
          </RadioLabel>
          <AddressGroup>
            <GroupLegend>
              <RadioLabel>
                <Radio name="ip" />
                <RadioText>使用下面的 IP 地址(S):</RadioText>
              </RadioLabel>
            </GroupLegend>
            <IpField label="IP 地址(I):" disabled />
            <IpField label="子网掩码(U):" disabled />
            <IpField label="默认网关(D):" disabled />
          </AddressGroup>
          <DnsBlock>
            <RadioLabel>
              <Radio name="dns" />
              <RadioText>自动获得 DNS 服务器地址(B)</RadioText>
            </RadioLabel>
            <AddressGroup>
              <GroupLegend>
                <RadioLabel>
                  <Radio name="dns" defaultChecked />
                  <RadioText>使用下面的 DNS 服务器地址(E):</RadioText>
                </RadioLabel>
              </GroupLegend>
              <IpField label="首选 DNS 服务器(P):" masked />
              <IpField label="备用 DNS 服务器(A):" />
            </AddressGroup>
          </DnsBlock>
          <FooterRow>
            <CheckLabel>
              <CheckBox $size={13} />
              退出时验证设置(L)
            </CheckLabel>
            <PushButton $w={103}>高级(V)...</PushButton>
          </FooterRow>
        </TabPanel>
        <ActionRow>
          <PushButton $w={86} $primary>确定</PushButton>
          <PushButton $w={86}>取消</PushButton>
        </ActionRow>
      </DialogBody>
      <MarkBox $x={27} $y={352} $w={210} $h={39} />
      <MarkText $x={251} $y={347}>选这个</MarkText>
      <MarkBox $x={30} $y={419} $w={379} $h={40} />
      <MarkText $x={87} $y={467}>备用服务器不要填</MarkText>
    </FloatingWindow>
  );
}

export default function App() {
  return (
    <>
      <GlobalStyle />
      <Desktop>
        <SharingCentre />
        <ConnectionsWindow />
        <StatusDialog />
        <PropertiesDialog />
        <Ipv4Dialog />
        <ImeBar>
          <ImeHandle />
          <ImeButton>英</ImeButton>
          <ImeButton aria-label="半角"><MoonIcon /></ImeButton>
          <ImeButton aria-label="标点"><PunctuationIcon /></ImeButton>
          <ImeButton>简</ImeButton>
          <ImeButton aria-label="表情"><SmileIcon /></ImeButton>
          <ImeButton aria-label="设置"><GearIcon /></ImeButton>
        </ImeBar>
        <Taskbar>
          <SystemButton aria-label="开始"><WindowsLogo /></SystemButton>
          <SystemButton aria-label="搜索"><CortanaIcon /></SystemButton>
          <AppList>
            {APPS.map((app, i) => (
              <AppButton key={i} aria-label={app.name} $active={app.active} $stacked={app.stacked}>
                {app.icon}
              </AppButton>
            ))}
          </AppList>
          <Tray>
            <TrayButton $w={70} aria-label="显示隐藏的图标"><Chevron size={14} turn={180} weight={1} /></TrayButton>
            <TrayButton $w={24}><GreenBadge>52</GreenBadge></TrayButton>
            <TrayButton $w={24} aria-label="安全"><ShieldIcon /></TrayButton>
            <TrayButton $w={24} aria-label="助手"><RobotIcon /></TrayButton>
            <TrayButton $w={24} aria-label="网络"><NetworkTrayIcon /></TrayButton>
            <TrayButton $w={24} aria-label="音量"><VolumeIcon /></TrayButton>
            <TrayButton $w={30} aria-label="触摸键盘"><KeyboardIcon /></TrayButton>
            <TrayButton $w={26}><LangText>英</LangText></TrayButton>
            <TrayButton $w={32}><ImeBadge>拼</ImeBadge></TrayButton>
            <Clock>
              19:51
              <br />
              2022/3/20 星期日
            </Clock>
            <NoticeButton $w={48} aria-label="通知">
              <MessageIcon />
              <CountBadge>4</CountBadge>
            </NoticeButton>
            <DesktopEdge aria-label="显示桌面" />
          </Tray>
        </Taskbar>
      </Desktop>
    </>
  );
}
